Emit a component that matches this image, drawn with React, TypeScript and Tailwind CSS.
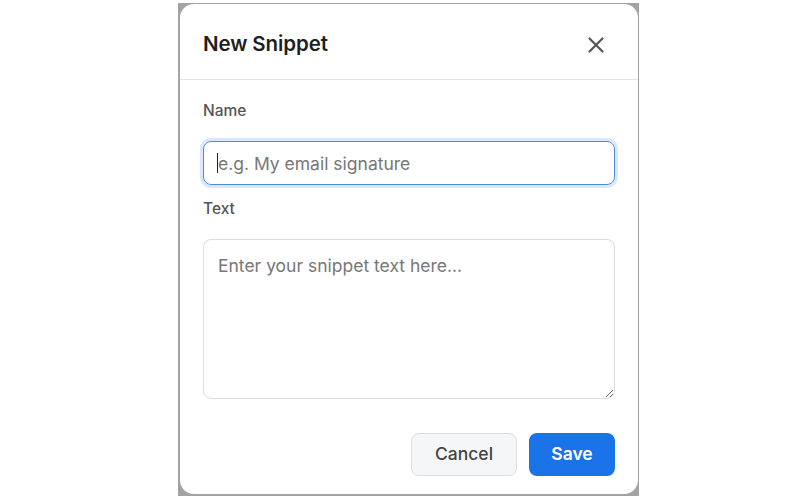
import React, { useState } from 'react';

const font = { fontFamily: 'Inter, "Noto Sans", sans-serif' };

const CloseIcon: React.FC = () => (
  <svg width="18" height="18" viewBox="0 0 18 18" fill="none" stroke="#555" strokeWidth="2.2" strokeLinecap="round">
    <path d="M2.5 2.5 L15.5 15.5 M15.5 2.5 L2.5 15.5" />
  </svg>
);

const SnippetModal: React.FC = () => {
  const [name, setName] = useState('');
  const [text, setText] = useState('');

  return (
    <div className="w-[458px] h-[490px] bg-white rounded-[14px] flex flex-col">
      {/* Header */}
      <div className="h-[76px] shrink-0 flex items-center justify-between pt-[6px] pl-[23px] pr-[33px] border-b border-[#e3e3e3]">
        <h2 className="text-[20.5px] font-semibold text-[#1f1f1f] tracking-[-0.1px]">New Snippet</h2>
        <button className="flex items-center justify-center">
          <CloseIcon />
        </button>
      </div>

      {/* Body */}
      <div className="flex flex-col px-[23px] pt-[21px] flex-1">
        <label className="text-[15.5px] font-medium text-[#555] leading-[20px]">Name</label>
        <div className="relative mt-[20px]">
          <input
            value={name}
            onChange={(e) => setName(e.target.value)}
            placeholder="e.g. My email signature"
            className="w-full h-[44px] rounded-[8px] border border-[#4b8bdc] ring-[3px] ring-[#dbe8fb] px-[14px] text-[17.5px] text-[#222] placeholder:text-[#777] outline-none"
          />
          <span className="absolute left-[14px] top-[12px] w-px h-[20px] bg-[#222]" />
        </div>
        <label className="text-[15.5px] font-medium text-[#555] leading-[20px] mt-[14px]">Text</label>
        <textarea
          value={text}
          onChange={(e) => setText(e.target.value)}
          placeholder="Enter your snippet text here..."
          className="mt-[20px] w-full h-[160px] rounded-[8px] border border-[#dcdcdc] px-[14px] py-[13px] text-[17.5px] leading-[26px] text-[#222] placeholder:text-[#777] outline-none"
        />
        <div className="flex justify-end gap-[12px] mt-[34px]">
          <button className="h-[43px] w-[106px] rounded-[8px] border border-[#dddddd] bg-[#f5f6f7] text-[17.5px] font-medium text-[#444]">
            Cancel
          </button>
          <button className="h-[43px] w-[86px] rounded-[8px] bg-[#1a73e8] text-[17.5px] font-semibold text-white">
            Save
          </button>
        </div>
      </div>
    </div>
  );
}

export default function App() {
  return (
    <div className="w-[800px] h-[500px] bg-white flex justify-center" style={font}>
      <div className="ml-[17px] mt-[3px] w-[461px] h-[493px] bg-[#a3a3a3] pl-[2px] pt-[1px]">
        <SnippetModal />
      </div>
    </div>
  );
}
